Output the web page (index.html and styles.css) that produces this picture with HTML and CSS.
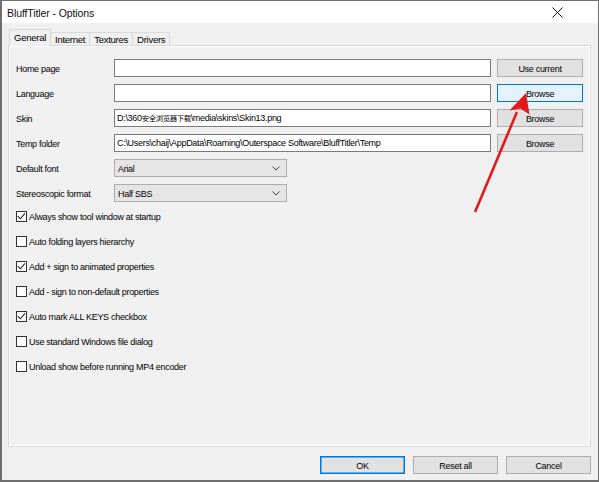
FILE: index.html
```html
<!DOCTYPE html>
<html>
<head>
<meta charset="utf-8">
<link rel="stylesheet" href="styles.css">
</head>
<body>
<div class="window">
  <div class="titlebar">
    <span class="title">BluffTitler - Options</span>
    <svg class="close" width="11" height="11" viewBox="0 0 11 11"><path d="M0.5 0.5 L10.5 10.5 M10.5 0.5 L0.5 10.5" stroke="#111" stroke-width="1" fill="none"/></svg>
  </div>
  <div class="client">
    <div class="tabs">
      <div class="tab active">General</div>
      <div class="tab">Internet</div>
      <div class="tab">Textures</div>
      <div class="tab">Drivers</div>
    </div>
    <div class="panel">
      <div class="fields">
        <div class="label">Home page</div>
        <div class="input"></div>
        <div class="btn">Use current</div>

        <div class="label">Language</div>
        <div class="input"></div>
        <div class="btn hot">Browse</div>

        <div class="label">Skin</div>
        <div class="input">D:\360<span class="cjk">安全浏览器下载</span>\media\skins\Skin13.png</div>
        <div class="btn">Browse</div>

        <div class="label">Temp folder</div>
        <div class="input">C:\Users\chaij\AppData\Roaming\Outerspace Software\BluffTitler\Temp</div>
        <div class="btn">Browse</div>

        <div class="label">Default font</div>
        <div class="select"><span>Arial</span><svg width="8" height="5" viewBox="0 0 8 5"><path d="M0.5 0.5 L4 4 L7.5 0.5" stroke="#444" fill="none"/></svg></div>
        <div></div>

        <div class="label">Stereoscopic format</div>
        <div class="select"><span>Half SBS</span><svg width="8" height="5" viewBox="0 0 8 5"><path d="M0.5 0.5 L4 4 L7.5 0.5" stroke="#444" fill="none"/></svg></div>
        <div></div>
      </div>
      <div class="checks">
        <div class="check"><span class="box on"><svg width="11" height="11" viewBox="0 0 11 11"><path d="M1.8 5.2 L4.3 7.8 L9 2.3" stroke="#222" stroke-width="1.1" fill="none"/></svg></span>Always show tool window at startup</div>
        <div class="check"><span class="box"></span>Auto folding layers hierarchy</div>
        <div class="check"><span class="box on"><svg width="11" height="11" viewBox="0 0 11 11"><path d="M1.8 5.2 L4.3 7.8 L9 2.3" stroke="#222" stroke-width="1.1" fill="none"/></svg></span>Add + sign to animated properties</div>
        <div class="check"><span class="box"></span>Add - sign to non-default properties</div>
        <div class="check"><span class="box on"><svg width="11" height="11" viewBox="0 0 11 11"><path d="M1.8 5.2 L4.3 7.8 L9 2.3" stroke="#222" stroke-width="1.1" fill="none"/></svg></span>Auto mark ALL KEYS checkbox</div>
        <div class="check"><span class="box"></span>Use standard Windows file dialog</div>
        <div class="check"><span class="box"></span>Unload show before running MP4 encoder</div>
      </div>
    </div>
    <div class="footer">
      <div class="btn wide default">OK</div>
      <div class="btn wide">Reset all</div>
      <div class="btn wide">Cancel</div>
    </div>
  </div>
  <svg class="arrow" width="599" height="482" viewBox="0 0 599 482">
    <path d="M475.5 211 L516.5 113" stroke="#e3191c" stroke-width="2.6" stroke-linecap="round" fill="none"/>
    <path d="M526 93 L529.5 114.5 L520.5 108.5 L509.5 110.5 Z" fill="#e3191c"/>
  </svg>
</div>
</body>
</html>
```
FILE: styles.css
```css
html, body {
  margin: 0;
  padding: 0;
  background: #f0f0f0;
}
.window {
  position: relative;
  width: 599px;
  height: 482px;
  box-sizing: border-box;
  border: 1px solid #6f6f6f;
  border-bottom-width: 2px;
  border-left-width: 2px;
  background: #f0f0f0;
  display: flex;
  flex-direction: column;
  font-family: "Liberation Sans", Arial, "Noto Sans CJK SC", sans-serif;
  font-size: 9px;
  letter-spacing: -0.3px;
  color: #000;
}
.titlebar {
  height: 22px;
  background: #fff;
  display: flex;
  align-items: center;
  justify-content: space-between;
  padding: 0 35px 0 5px;
}
.title {
  font-size: 10.5px;
  letter-spacing: -0.1px;
  color: #111;
  padding-top: 1px;
}
.client {
  flex: 1;
  display: flex;
  flex-direction: column;
  padding: 0 7px 6px 6px;
}
.tabs {
  display: flex;
  align-items: flex-end;
  margin-top: 6px;
  height: 16px;
  padding-left: 1px;
  position: relative;
  z-index: 1;
}
.tab {
  height: 12px;
  line-height: 13px;
  padding: 0 4px;
  border: 1px solid #d9d9d9;
  border-bottom: none;
  margin-left: -1px;
  background: #f0f0f0;
  font-size: 9.6px;
}
.tab.active {
  height: 16px;
  line-height: 15px;
  margin-bottom: -1px;
  margin-left: 0;
  padding: 0 4px;
  background: #f0f0f0;
  border-color: #d4d4d4;
}
.panel {
  flex: 1;
  border: 1px solid #d9d9d9;
  box-shadow: inset 1px 1px 0 #fff, inset -1px -1px 0 #fff;
  padding: 13px 7px 0 7px;
  display: flex;
  flex-direction: column;
}
.fields {
  display: grid;
  grid-template-columns: 92px 377px 86px;
  grid-auto-rows: 18px;
  column-gap: 6px;
  row-gap: 7px;
  align-items: center;
}
.label {
  white-space: nowrap;
  padding-top: 1px;
}
.input {
  height: 18px;
  box-sizing: border-box;
  border: 1px solid #7a7a7a;
  background: #fff;
  padding: 0 2px;
  line-height: 16px;
  white-space: nowrap;
  overflow: hidden;
}
.cjk {
  font-family: "Noto Sans CJK SC", sans-serif;
  font-size: 7.4px;
  letter-spacing: -0.4px;
}
.btn {
  height: 18px;
  box-sizing: border-box;
  border: 1px solid #adadad;
  background: #e1e1e1;
  display: flex;
  align-items: center;
  justify-content: center;
  padding-top: 1px;
}
.btn.hot {
  border-color: #0078d7;
  background: #e5f1fb;
}
.select {
  width: 173px;
  height: 18px;
  box-sizing: border-box;
  border: 1px solid #acacac;
  background: #e5e5e5;
  display: flex;
  align-items: center;
  justify-content: space-between;
  padding: 1px 6px 0 3px;
}
.select svg {
  margin-top: -1px;
}
.checks {
  margin-top: 9px;
  display: flex;
  flex-direction: column;
  gap: 14px;
}
.check {
  height: 11px;
  display: flex;
  align-items: center;
  white-space: nowrap;
}
.box {
  width: 11px;
  height: 11px;
  box-sizing: border-box;
  border: 1px solid #333;
  background: #fff;
  margin-right: 2px;
  position: relative;
  flex: none;
}
.box svg {
  position: absolute;
  left: -1px;
  top: -1px;
}
.footer {
  margin-top: 9px;
  display: flex;
  justify-content: flex-end;
  gap: 8px;
}
.btn.wide {
  width: 85px;
}
.btn.default {
  border-color: #0078d7;
  box-shadow: inset 0 0 0 0.5px #0078d7;
}
.arrow {
  position: absolute;
  left: -2px;
  top: -1px;
  pointer-events: none;
}
```
